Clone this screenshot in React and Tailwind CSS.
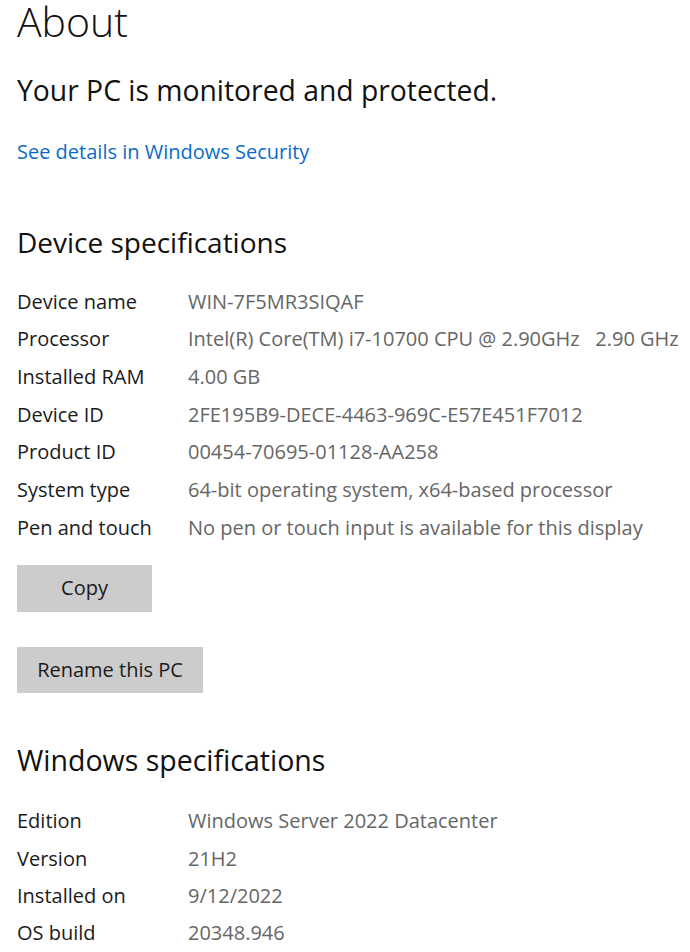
export default function App() {
  const device = [
    ["Device name", "WIN-7F5MR3SIQAF"],
    ["Processor", "Intel(R) Core(TM) i7-10700 CPU @ 2.90GHz   2.90 GHz"],
    ["Installed RAM", "4.00 GB"],
    ["Device ID", "2FE195B9-DECE-4463-969C-E57E451F7012"],
    ["Product ID", "00454-70695-01128-AA258"],
    ["System type", "64-bit operating system, x64-based processor"],
    ["Pen and touch", "No pen or touch input is available for this display"],
  ];
  const win = [
    ["Edition", "Windows Server 2022 Datacenter"],
    ["Version", "21H2"],
    ["Installed on", "9/12/2022"],
    ["OS build", "20348.946"],
  ];
  return (
    <div className="w-[690px] h-[952px] overflow-hidden bg-white pl-[17px] pt-[1px] text-[#1b1b1b]" style={{ fontFamily: '"Open Sans", "Noto Sans", sans-serif' }}>
      <h1 className="h-[41px] leading-none text-[41px] font-light text-[#111]">About</h1>
      <p className="mt-[28px] h-[40px] leading-[40px] text-[28.3px] text-[#111]">Your PC is monitored and protected.</p>
      <p className="mt-[27px] h-[30px] leading-[30px] text-[20px] text-[#0a6cc8]">See details in Windows Security</p>
      <h2 className="mt-[55px] h-[40px] leading-[40px] text-[28px] text-[#111]">Device specifications</h2>
      <div className="mt-[21px]">
        {device.map(([k, v]) => (
          <div key={k} className="flex h-[37.67px] items-center text-[20px] leading-[28px]">
            <div className="w-[171px] shrink-0 text-[#1b1b1b]">{k}</div>
            <div className="whitespace-pre text-[#666666]">{v}</div>
          </div>
        ))}
      </div>
      <button className="mt-[18px] block h-[47px] w-[135px] bg-[#cccccc] text-[20px] text-[#1b1b1b]">Copy</button>
      <button className="mt-[35px] block h-[46px] w-[186px] bg-[#cccccc] text-[20px] text-[#1b1b1b]">Rename this PC</button>
      <h2 className="mt-[47px] h-[40px] leading-[40px] text-[28.5px] text-[#111]">Windows specifications</h2>
      <div className="mt-[23px]">
        {win.map(([k, v]) => (
          <div key={k} className="flex h-[37.33px] items-center text-[20px] leading-[28px]">
            <div className="w-[171px] shrink-0 text-[#1b1b1b]">{k}</div>
            <div className="whitespace-pre text-[#666666]">{v}</div>
          </div>
        ))}
      </div>
    </div>
  );
}
